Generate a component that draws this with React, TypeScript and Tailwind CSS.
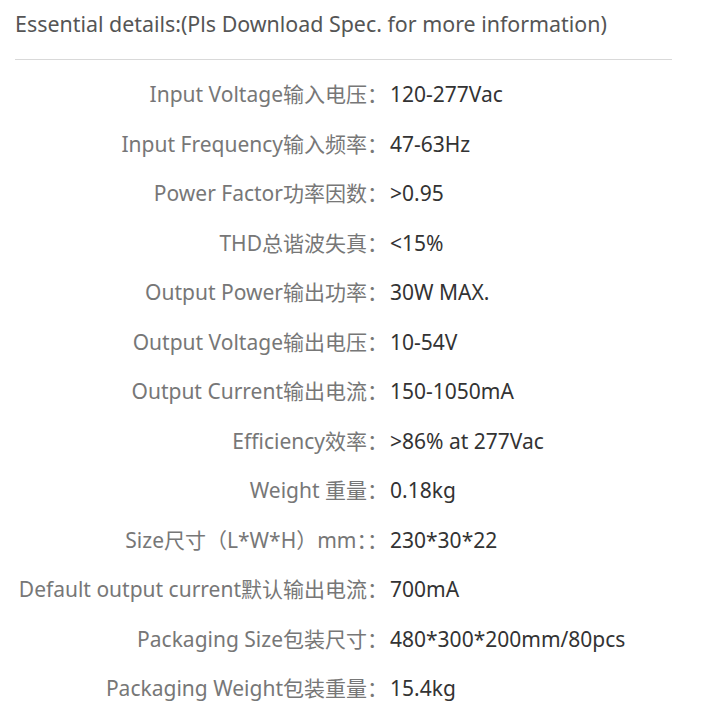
const specs: [string, string][] = [
  ["Input Voltage输入电压：", "120-277Vac"],
  ["Input Frequency输入频率：", "47-63Hz"],
  ["Power Factor功率因数：", ">0.95"],
  ["THD总谐波失真：", "<15%"],
  ["Output Power输出功率：", "30W MAX."],
  ["Output Voltage输出电压：", "10-54V"],
  ["Output Current输出电流：", "150-1050mA"],
  ["Efficiency效率：", ">86% at 277Vac"],
  ["Weight 重量：", "0.18kg"],
  ["Size尺寸（L*W*H）mm：：", "230*30*22"],
  ["Default output current默认输出电流：", "700mA"],
  ["Packaging Size包装尺寸：", "480*300*200mm/80pcs"],
  ["Packaging Weight包装重量：", "15.4kg"],
];

export default function App() {
  return (
    <div className="w-[708px] h-[712px] bg-white px-[15px] font-['Noto_Sans','Noto_Sans_CJK_SC',sans-serif] overflow-hidden">
      <h2 className="pt-[8px] pb-[19px] text-[21.4px] leading-[32px] text-[#555] border-b border-[#d9d9d9] w-[657px] whitespace-nowrap">
        Essential details:(Pls Download Spec. for more information)
      </h2>
      <div className="pt-[10px]">
        {specs.map(([label, value]) => (
          <SpecRow key={label} label={label} value={value} />
        ))}
      </div>
    </div>
  );
}

const SpecRow = ({ label, value }: { label: string; value: string }) => (
  <div className="flex items-center h-[49.5px] text-[21px]">
    <span className="w-[373px] text-right text-[#777] whitespace-nowrap">{label}</span>
    <span className="pl-[2px] text-[#333] whitespace-nowrap">{value}</span>
  </div>
);
